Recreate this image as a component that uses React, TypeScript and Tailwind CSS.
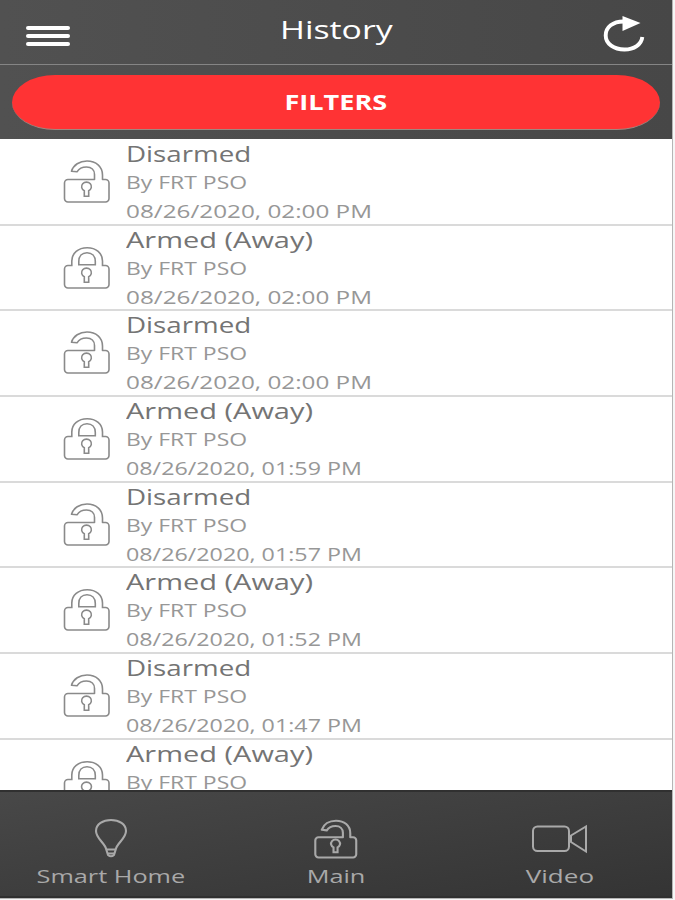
const events = [
  { id: 1, armed: false, by: "By FRT PSO", date: "08/26/2020, 02:00 PM" },
  { id: 2, armed: true, by: "By FRT PSO", date: "08/26/2020, 02:00 PM" },
  { id: 3, armed: false, by: "By FRT PSO", date: "08/26/2020, 02:00 PM" },
  { id: 4, armed: true, by: "By FRT PSO", date: "08/26/2020, 01:59 PM" },
  { id: 5, armed: false, by: "By FRT PSO", date: "08/26/2020, 01:57 PM" },
  { id: 6, armed: true, by: "By FRT PSO", date: "08/26/2020, 01:52 PM" },
  { id: 7, armed: false, by: "By FRT PSO", date: "08/26/2020, 01:47 PM" },
  { id: 8, armed: true, by: "By FRT PSO", date: "" },
];

function LockIcon({ open, className }: { open: boolean; className: string }) {
  return (
    <svg viewBox="0 0 50 48" preserveAspectRatio="none" fill="none" stroke="currentColor" className={className}>
      {open ? (
        <path
          strokeLinejoin="round"
          d="M32.5 21.5H6a3.5 3.5 0 0 0-3.5 3.5v15.5a3.5 3.5 0 0 0 3.5 3.5h37.5a3.5 3.5 0 0 0 3.5-3.5V25a3.5 3.5 0 0 0-3.5-3.5h-3V17C40.5 8.500 34 3 25 3C17.500 3 11.500 7 9.500 13.200l5.500.6C17 10.500 20 9 24.500 9C29.500 9 32.500 12 32.500 16.500z"
        />
      ) : (
        <>
          <path d="M9.800 21.500H6a3.500 3.500 0 0 0-3.500 3.500v15.500a3.500 3.500 0 0 0 3.500 3.500h37.500a3.500 3.500 0 0 0 3.500-3.500V25a3.500 3.500 0 0 0-3.500-3.500h-3V17C40.500 9 34 3.700 25.200 3.700S9.800 9 9.800 17z" />
          <path d="M16.800 20.800V17.500C16.800 12 20 8.700 25 8.700s8.300 3.300 8.300 8.800v3.300z" />
        </>
      )}
      <path d="M22.300 32.800a4.900 4.600 0 1 1 4.400 0v5.500h-4.400z" />
    </svg>
  );
}

function BulbIcon() {
  return (
    <svg viewBox="0 0 34 42" fill="none" stroke="currentColor" strokeWidth="2.100" className="h-[42px] w-[34px]">
      <path d="M12.300 31.500C11 25 2 20.500 2 13C2 6 9 2 17 2s15 4 15 11c0 7.500-9 12-10.300 18.500l-1.700 5.500q-3 2.500-6 0z" />
      <path d="M12.500 31.500h9M14 35.500h6" />
    </svg>
  );
}

function CameraIcon() {
  return (
    <svg viewBox="0 0 58 30" fill="none" stroke="currentColor" strokeWidth="2" className="h-[30px] w-[58px]">
      <rect x="2" y="2.500" width="36" height="24.500" rx="4.500" />
      <path d="M40 11.500L55 2.500v25L40 18z" />
    </svg>
  );
}

function Header() {
  return (
    <header className="flex h-[65px] shrink-0 justify-between border-b border-[#858585] px-[26px]">
      <button className="mt-[26px] flex h-5 w-[44px] flex-col gap-1">
        <span className="h-1 w-full shrink-0 rounded-xs bg-white" />
        <span className="h-1 w-full shrink-0 rounded-xs bg-white" />
        <span className="h-1 w-full shrink-0 rounded-xs bg-white" />
      </button>
      <h1 className="mt-[9px] scale-x-[1.3] text-[26px] leading-10 text-white">History</h1>
      <button className="mt-[15px] h-[38px] w-[44px] text-white">
        <svg viewBox="0 0 44 38" fill="none" className="h-[38px] w-[44px]">
          <path d="M21.500 6.500C11 6.500 3.700 12 3.700 20.500S12 34.500 22.500 34.500C32 34.500 39.500 29.500 40.300 22" stroke="currentColor" strokeWidth="3.900" />
          <path d="M20.500 1L38.500 8L20.500 16z" fill="currentColor" />
        </svg>
      </button>
    </header>
  );
}

export default function App() {
  return (
    <div className="h-[900px] w-[675px] overflow-hidden bg-[#f6f6f6] font-['Open_Sans','Noto_Sans',sans-serif]">
      <div className="flex h-[899px] w-[673px] flex-col overflow-hidden border-r border-b border-[#b5b5b5] bg-white">
        <div className="flex h-[139px] shrink-0 flex-col bg-linear-to-r from-[#515151] to-[#474747]">
          <Header />
          <div className="px-3 pt-[10px]">
            <button className="flex h-[55px] w-[648px] items-center justify-center rounded-[44px/28px] border-b border-[#a08880] bg-[#ff3334] text-white">
              <span className="scale-x-[1.26] text-[21.5px] font-bold">FILTERS</span>
            </button>
          </div>
        </div>

        <main className="min-h-0 flex-1 overflow-hidden pt-px">
          {events.map((event) => (
            <div key={event.id} className="flex h-[85.7px] border-b-2 border-[#dadada] pl-[62px]">
              <LockIcon open={!event.armed} className="mt-[18px] h-12 w-[50px] shrink-0 text-[#8a8a8a] [stroke-width:1.6]" />
              <div className="-mt-px ml-[14px] flex flex-col items-start whitespace-nowrap text-[#979797]">
                {event.armed ? (
                  <span className="h-7 origin-left scale-x-[1.38] text-[21px] leading-[31px] text-[#747474]">Armed (Away)</span>
                ) : (
                  <span className="h-7 origin-left scale-x-[1.32] text-[21px] leading-[31px] text-[#747474]">Disarmed</span>
                )}
                <span className="h-[29px] origin-left scale-x-[1.24] text-[18.5px] leading-[29px]">{event.by}</span>
                {event.date.includes(", 02") ? (
                  <span className="h-[26px] origin-left scale-x-[1.312] text-[18.5px] leading-[29px]">{event.date}</span>
                ) : (
                  <span className="h-[26px] origin-left scale-x-[1.258] text-[18.5px] leading-[29px]">{event.date}</span>
                )}
              </div>
            </div>
          ))}
        </main>

        <nav className="grid h-[108px] shrink-0 grid-cols-3 border-y-2 border-[#303030] bg-linear-to-br from-[#484848] to-[#343434] text-[19px] font-medium text-[#a9a9a9]">
          <a className="flex flex-col items-center pr-0.5">
            <div className="flex h-[71px] items-end pb-[3px]">
              <BulbIcon />
            </div>
            <span className="scale-x-[1.33] leading-[26px]">Smart Home</span>
          </a>
          <a className="flex flex-col items-center">
            <div className="flex h-[71px] items-end pb-[2px]">
              <LockIcon open className="h-[43px] w-[46px] [stroke-width:2.3]" />
            </div>
            <span className="scale-x-[1.33] leading-[26px]">Main</span>
          </a>
          <a className="flex flex-col items-center">
            <div className="flex h-[71px] items-end pb-[9px]">
              <CameraIcon />
            </div>
            <span className="scale-x-[1.37] leading-[26px]">Video</span>
          </a>
        </nav>
      </div>
    </div>
  );
}
